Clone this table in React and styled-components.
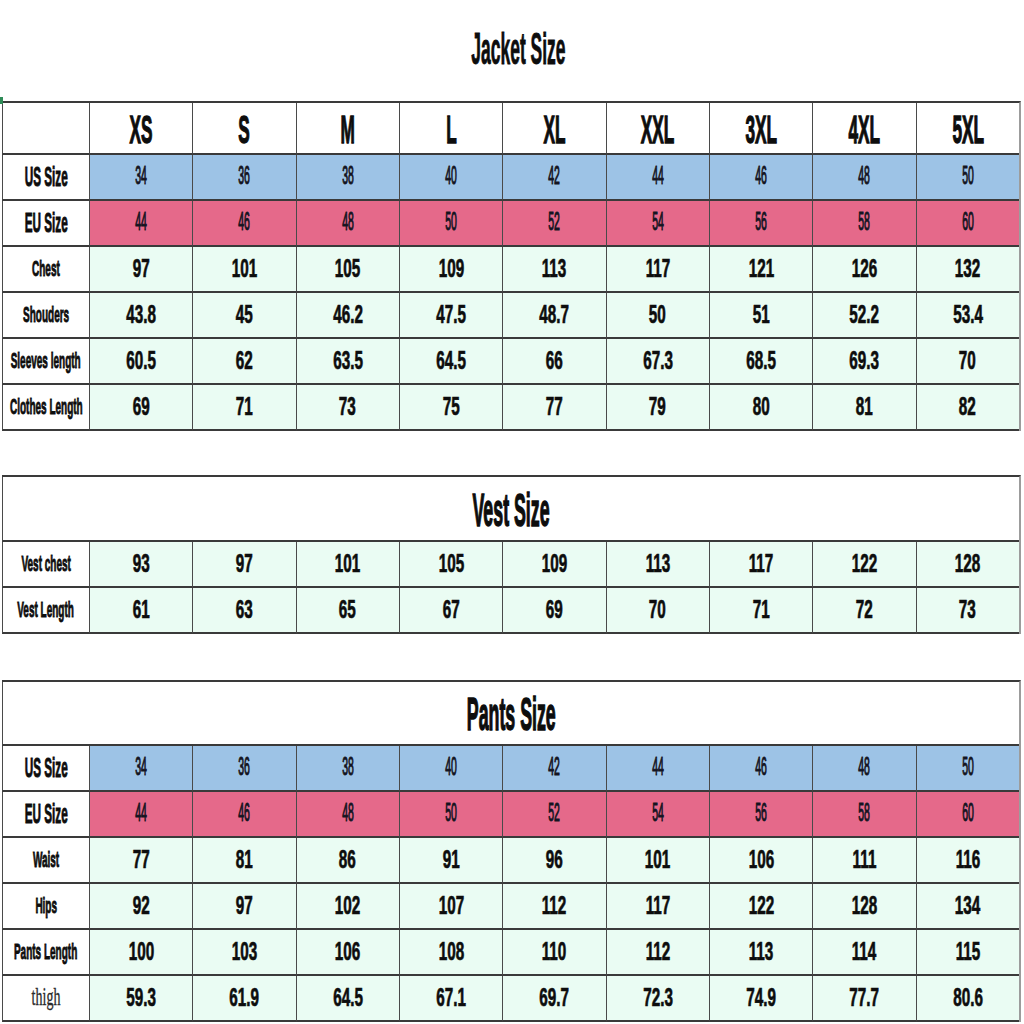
import React from "react";
import styled, { createGlobalStyle } from "styled-components";

const GlobalStyle = createGlobalStyle`
  html, body {
    margin: 0;
    padding: 0;
    background: #ffffff;
  }
  body {
    font-family: "Liberation Sans", Arial, sans-serif;
  }
`;

const SIZES = ["XS", "S", "M", "L", "XL", "XXL", "3XL", "4XL", "5XL"];
const US = [34, 36, 38, 40, 42, 44, 46, 48, 50];
const EU = [44, 46, 48, 50, 52, 54, 56, 58, 60];

const jacketRows = [
  ["Chest", [97, 101, 105, 109, 113, 117, 121, 126, 132]],
  ["Shouders", ["43.8", 45, "46.2", "47.5", "48.7", 50, 51, "52.2", "53.4"]],
  ["Sleeves length", ["60.5", 62, "63.5", "64.5", 66, "67.3", "68.5", "69.3", 70]],
  ["Clothes Length", [69, 71, 73, 75, 77, 79, 80, 81, 82]],
];

const vestRows = [
  ["Vest chest", [93, 97, 101, 105, 109, 113, 117, 122, 128]],
  ["Vest Length", [61, 63, 65, 67, 69, 70, 71, 72, 73]],
];

const pantsRows = [
  ["Waist", [77, 81, 86, 91, 96, 101, 106, 111, 116]],
  ["Hips", [92, 97, 102, 107, 112, 117, 122, 128, 134]],
  ["Pants Length", [100, 103, 106, 108, 110, 112, 113, 114, 115]],
];

const thigh = ["59.3", "61.9", "64.5", "67.1", "69.7", "72.3", "74.9", "77.7", "80.6"];

const COLORS = {
  blue: "#9dc3e6",
  pink: "#e5698a",
  mint: "#eafcf3",
  white: "#ffffff",
};

const Sheet = styled.div`
  width: 1024px;
  padding: 0 3px 0 2px;
  box-sizing: border-box;
  position: relative;
`;

const PageTitle = styled.div`
  height: 101px;
  display: flex;
  align-items: center;
  justify-content: center;
  padding-left: 14px;
  box-sizing: border-box;
`;

const Table = styled.div`
  position: relative;
  display: grid;
  grid-template-columns: 87px repeat(9, 1fr);
  grid-template-rows: ${(p) => p.$rows};
  border-top: 2px solid #3a3a3a;
  border-right: 2px solid #9c9c9c;
  margin-top: ${(p) => p.$gap || 0}px;
`;

const Cell = styled.div`
  background: ${(p) => COLORS[p.$bg] || COLORS.white};
  border-left: 1px solid #4a4a4a;
  border-bottom: 2px solid #3a3a3a;
  display: flex;
  align-items: center;
  justify-content: center;
  overflow: hidden;
  box-sizing: border-box;
`;

const TitleCell = styled(Cell)`
  grid-column: 1 / -1;
  padding-top: 4px;
`;

const Txt = styled.span`
  display: inline-block;
  font-family: ${(p) =>
    p.$serif
      ? `"Liberation Serif", "Times New Roman", serif`
      : `"Liberation Sans", Arial, sans-serif`};
  font-weight: ${(p) => (p.$bold ? 700 : 400)};
  font-size: ${(p) => p.$size}px;
  line-height: 1;
  white-space: nowrap;
  color: ${(p) => p.$color || "#0d0d0d"};
  -webkit-text-stroke: ${(p) => p.$stroke ?? 0.5}px ${(p) => p.$color || "#0d0d0d"};
  transform: scale(${(p) => p.$sx ?? 0.82}, ${(p) => p.$sy});
`;

const Handle = styled.div`
  position: absolute;
  left: -2px;
  top: -6px;
  width: 3px;
  height: 7px;
  background: #2e8b57;
`;

const Label = ({ text, big }) =>
  text === "thigh" ? (
    <Txt $serif $size={14} $sx={1} $sy={1.85} $stroke={0.2} $color="#2a2a2a">
      {text}
    </Txt>
  ) : (
    <Txt $bold $size={big ? 14.3 : 12.2} $sy={big ? 1.9 : 1.8}>
      {text}
    </Txt>
  );

const ValueRow = ({ label, values, bg, regular, bigLabel }) => (
  <>
    <Cell>
      <Label text={label} big={bigLabel} />
    </Cell>
    {values.map((v, i) => (
      <Cell key={i} $bg={bg}>
        {regular ? (
          <Txt $size={12.8} $sy={1.95} $stroke={0.55} $color="#141421">
            {v}
          </Txt>
        ) : (
          <Txt $bold $size={18.6} $sy={1.36}>
            {v}
          </Txt>
        )}
      </Cell>
    ))}
  </>
);

const SizeRows = () => (
  <>
    <ValueRow label="US Size" values={US} bg="blue" regular bigLabel />
    <ValueRow label="EU Size" values={EU} bg="pink" regular bigLabel />
  </>
);

const SectionTitle = ({ children }) => (
  <TitleCell>
    <Txt $bold $size={21.7} $sy={2.1} $stroke={0.7}>
      {children}
    </Txt>
  </TitleCell>
);

export default function App() {
  return (
    <>
      <GlobalStyle />
      <Sheet>
        <PageTitle>
          <Txt $bold $size={21.3} $sy={2.1} $stroke={0.4}>
            Jacket Size
          </Txt>
        </PageTitle>

        <Table $rows="52px repeat(6, 46px)">
          <Handle />
          <Cell />
          {SIZES.map((s) => (
            <Cell key={s}>
              <Txt $bold $size={21} $sy={1.88} $stroke={0.7}>
                {s}
              </Txt>
            </Cell>
          ))}
          <SizeRows />
          {jacketRows.map(([label, values]) => (
            <ValueRow key={label} label={label} values={values} bg="mint" />
          ))}
        </Table>

        <Table $gap={44} $rows="65px repeat(2, 46px)">
          <SectionTitle>Vest Size</SectionTitle>
          {vestRows.map(([label, values]) => (
            <ValueRow key={label} label={label} values={values} bg="mint" />
          ))}
        </Table>

        <Table $gap={46} $rows="64px repeat(6, 46px)">
          <SectionTitle>Pants Size</SectionTitle>
          <SizeRows />
          {pantsRows.map(([label, values]) => (
            <ValueRow key={label} label={label} values={values} bg="mint" />
          ))}
          <ValueRow label="thigh" values={thigh} bg="mint" />
        </Table>
      </Sheet>
    </>
  );
}
